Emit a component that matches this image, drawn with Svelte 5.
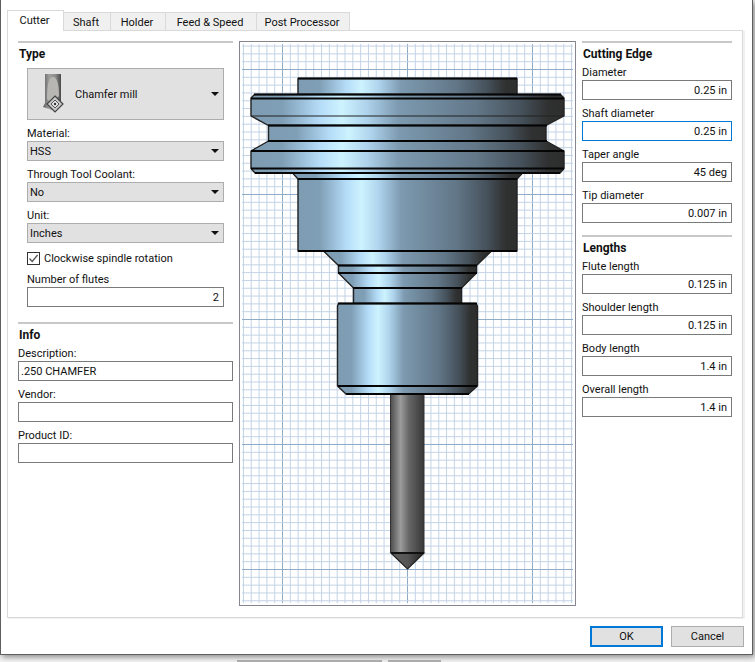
<script>
  const cuttingEdge = [
    { label: 'Diameter', value: '0.25 in' },
    { label: 'Shaft diameter', value: '0.25 in', focus: true },
    { label: 'Taper angle', value: '45 deg' },
    { label: 'Tip diameter', value: '0.007 in' }
  ];
  const lengths = [
    { label: 'Flute length', value: '0.125 in' },
    { label: 'Shoulder length', value: '0.125 in' },
    { label: 'Body length', value: '1.4 in' },
    { label: 'Overall length', value: '1.4 in' }
  ];
  const selects = [
    { label: 'Material:', value: 'HSS' },
    { label: 'Through Tool Coolant:', value: 'No' },
    { label: 'Unit:', value: 'Inches' }
  ];
  const info = [
    { label: 'Description:', value: '.250 CHAMFER' },
    { label: 'Vendor:', value: '' },
    { label: 'Product ID:', value: '' }
  ];
  const tabs = ['Cutter', 'Shaft', 'Holder', 'Feed & Speed', 'Post Processor'];

  const step = 125 / 16;
  const vLines = Array.from({ length: 43 }, (_, i) => ({ x: 282.5 + (i - 5) * step, major: (i - 5) % 16 === 0 }));
  const hLines = Array.from({ length: 72 }, (_, i) => ({ y: 69.5 + (i - 3) * step, major: (i - 3) % 16 === 0 }));

  const shapes = [
    'M298 78.5H517V94.5H298Z',
    'M254.5 94.5H560.5L564 98V116L546 125.5H268.5L251 116V98Z',
    'M268.5 125.5H546V141H268.5Z',
    'M268.5 141H546L564 151V168.5L560 173H255L251 168.5V151Z',
    'M292.5 173H522.5L517 179H298Z',
    'M298 179H517V251H298Z',
    'M323.5 251H491.5L476.5 265.5H338.5Z',
    'M338.5 265.5H476.5V273H338.5Z',
    'M338.5 273H476.5L461.5 288H353.5Z',
    'M353.5 288H461.5V303.5H353.5Z',
    'M338.5 303.5H476L477.5 306V386L468.5 394H346L337.5 386V306Z'
  ];
  const bars = [
    [298, 517, 78.5], [254, 561, 94.5], [251, 564, 98.5], [268, 547, 125.5], [268, 547, 141],
    [251, 564, 151], [251, 564, 168.5], [255, 560, 173], [298, 517, 179], [298, 517, 251],
    [338, 477, 265.5], [338, 477, 273], [353, 462, 288], [338, 477, 303.5], [338, 477, 386], [346, 469, 394]
  ];
</script>

{#snippet field(label, value, focus)}
  <div class="field">
    <span class="label">{label}</span>
    <input class="num" class:focus readonly {value} />
  </div>
{/snippet}

<div class="window">
  <div class="tabs">
    {#each tabs as t, i}
      <div class="tab" class:active={i === 0}>{t}</div>
    {/each}
  </div>

  <div class="panel">
    <div class="col">
      <div class="head">Type</div>
      <div class="indent">
        <div class="big select">
          <svg class="tool-icon" width="22" height="40" viewBox="0 0 22 40">
            <defs>
              <linearGradient id="ic" x1="0" x2="1" y1="0" y2="0">
                <stop offset="0" stop-color="#5e5e5e" />
                <stop offset="0.35" stop-color="#a0a0a0" />
                <stop offset="0.7" stop-color="#8a8a8a" />
                <stop offset="1" stop-color="#4a4a4a" />
              </linearGradient>
            </defs>
            <path d="M3 0H19V27L13 37L1 33L3 29Z" fill="url(#ic)" />
            <path d="M5 25C5 7 8 3 11 3C14 3 17 7 17 22L10 29Z" fill="#b8b6b2" />
            <path d="M13 22L21 30L13 38L5 30Z" fill="#c8c8c8" stroke="#444" stroke-width="1.2" />
            <path d="M13 26L17 30L13 34L9 30Z" fill="#e6e6e6" stroke="#555" />
            <circle cx="13" cy="30" r="1.2" fill="#333" />
          </svg>
          <span class="big-text">Chamfer mill</span>
          <i class="arrow"></i>
        </div>
        {#each selects as s}
          <div class="field">
            <span class="label">{s.label}</span>
            <div class="select"><span>{s.value}</span><i class="arrow"></i></div>
          </div>
        {/each}
        <div class="check">
          <span class="box">
            <svg width="11" height="11" viewBox="0 0 11 11"><path d="M1.5 5.5L4.2 8.5L9.6 2" fill="none" stroke="#555" stroke-width="1.3" /></svg>
          </span>
          <span>Clockwise spindle rotation</span>
        </div>
        <div class="field flutes">
          <span class="label">Number of flutes</span>
          <input class="num" readonly value="2" />
        </div>
      </div>
      <div class="head second">Info</div>
      {#each info as f}
        <div class="field">
          <span class="label">{f.label}</span>
          <input class="text" readonly value={f.value} />
        </div>
      {/each}
    </div>

    <div class="canvas">
      <svg width="335" height="563" viewBox="240 42 335 563">
        <defs>
          <linearGradient id="steel" x1="0" x2="1" y1="0" y2="0">
            <stop offset="0" stop-color="#7e9cb2" />
            <stop offset="0.1" stop-color="#7f9fb6" />
            <stop offset="0.22" stop-color="#b5dcf8" />
            <stop offset="0.29" stop-color="#cdf3ff" />
            <stop offset="0.37" stop-color="#aed3ec" />
            <stop offset="0.47" stop-color="#7d9ab0" />
            <stop offset="0.72" stop-color="#627788" />
            <stop offset="0.86" stop-color="#46525c" />
            <stop offset="0.95" stop-color="#2f3030" />
            <stop offset="1" stop-color="#2e2e2e" />
          </linearGradient>
          <linearGradient id="shank" x1="0" x2="1" y1="0" y2="0">
            <stop offset="0" stop-color="#4c4c4c" />
            <stop offset="0.3" stop-color="#9c9c9c" />
            <stop offset="0.55" stop-color="#666" />
            <stop offset="1" stop-color="#383838" />
          </linearGradient>
          <linearGradient id="tip" x1="0" x2="1" y1="0" y2="0">
            <stop offset="0" stop-color="#606060" />
            <stop offset="0.5" stop-color="#555" />
            <stop offset="1" stop-color="#222" />
          </linearGradient>
        </defs>
        <g stroke-width="1">
          {#each vLines as l}
            <line x1={l.x} x2={l.x} y1="44" y2="603" stroke={l.major ? '#8eabc8' : '#c3d3e6'} />
          {/each}
          {#each hLines as l}
            <line x1="242" x2="573" y1={l.y} y2={l.y} stroke={l.major ? '#8eabc8' : '#c3d3e6'} />
          {/each}
        </g>
        <path d="M390.5 394H424V552.5H390.5Z" fill="url(#shank)" stroke="#333" stroke-width="1" />
        <path d="M391 553H424L407.5 569Z" fill="url(#tip)" stroke="#222" stroke-width="1.2" />
        <line x1="391" x2="424" y1="553" y2="553" stroke="#111" stroke-width="2" />
        {#each shapes as d}
          <path {d} fill="url(#steel)" stroke="#222" stroke-width="1.4" stroke-linejoin="round" />
        {/each}
        {#each bars as b}
          <line x1={b[0]} x2={b[1]} y1={b[2]} y2={b[2]} stroke="#050505" stroke-width="2" />
        {/each}
        <line x1="251" x2="564" y1="116" y2="116" stroke="#222" stroke-width="1" />
      </svg>
    </div>

    <div class="col">
      <div class="head">Cutting Edge</div>
      {#each cuttingEdge as f}
        {@render field(f.label, f.value, f.focus)}
      {/each}
      <div class="head lengths">Lengths</div>
      {#each lengths as f}
        {@render field(f.label, f.value, false)}
      {/each}
    </div>
  </div>

  <div class="footer">
    <button class="btn ok">OK</button>
    <button class="btn">Cancel</button>
  </div>
</div>

<div class="behind">
  <span class="bar a"></span>
  <span class="bar b"></span>
</div>

<style>
  :global(body) {
    margin: 0;
    background: #f4f4f4;
    overflow: hidden;
  }
  .window {
    box-sizing: border-box;
    width: 753px;
    height: 655px;
    background: #fff;
    border: 1px solid #5f5f5f;
    border-top: none;
    padding: 10px 8px 0 6px;
    box-shadow: 2px 2px 6px rgba(0, 0, 0, 0.45);
    font-family: 'Roboto', 'Noto Sans', sans-serif;
    font-size: 11px;
    color: #111;
    display: flex;
    flex-direction: column;
  }
  .tabs {
    display: flex;
    height: 21px;
    margin-bottom: -1px;
    position: relative;
    z-index: 1;
  }
  .tab {
    box-sizing: border-box;
    height: 19px;
    margin-top: 2px;
    padding: 0 2px 0 0;
    line-height: 19px;
    text-align: center;
    background: #f0f0f0;
    border: 1px solid #d9d9d9;
    border-left: none;
    white-space: nowrap;
  }
  .tab.active {
    height: 21px;
    margin-top: 0;
    width: 57px;
    background: #fff;
    border-left: 1px solid #d9d9d9;
    border-bottom: none;
    line-height: 20px;
  }
  .tab:nth-child(2) { width: 47px; }
  .tab:nth-child(3) { width: 55px; }
  .tab:nth-child(4) { width: 91px; }
  .tab:nth-child(5) { width: 93px; }
  .panel {
    box-sizing: border-box;
    width: 736px;
    height: 588px;
    border: 1px solid #d9d9d9;
    box-shadow: 1px 1px 0 #f0f0f0, 2px 1px 0 #f0f0f0;
    padding: 10px 10px 0;
    display: grid;
    grid-template-columns: 215px 337px 150px;
    column-gap: 6px;
    align-items: start;
  }
  .head {
    border-top: 2px solid #c8c8c8;
    height: 16px;
    line-height: 22px;
    padding-left: 1px;
    font-weight: 700;
    font-size: 12px;
  }
  .head.second { margin-top: 15px; }
  .head.lengths { margin-top: 12px; }
  .indent { padding: 9px 9px 0; }
  .field { display: flex; flex-direction: column; }
  .label {
    height: 21px;
    line-height: 15px;
    padding-top: 6px;
    box-sizing: border-box;
    white-space: nowrap;
  }
  .select {
    box-sizing: border-box;
    height: 20px;
    background: #e1e1e1;
    border: 1px solid #adadad;
    display: flex;
    align-items: center;
    justify-content: space-between;
    padding: 1px 4px 0 2px;
  }
  .arrow {
    width: 0;
    height: 0;
    border-left: 4px solid transparent;
    border-right: 4px solid transparent;
    border-top: 4px solid #111;
    margin-top: -1px;
  }
  .big {
    height: 52px;
    padding-left: 14px;
    justify-content: flex-start;
  }
  .tool-icon { flex: none; margin-top: -1px; }
  .big-text { margin-left: 11px; flex: 1; }
  input {
    box-sizing: border-box;
    display: block;
    width: 100%;
    height: 20px;
    border: 1px solid #7a7a7a;
    background: #fff;
    font: inherit;
    color: #111;
    outline: none;
    margin: 0;
  }
  .num { text-align: right; padding: 1px 4px 0; }
  .text { padding: 1px 2px 0; }
  .num.focus { border-color: #0078d7; }
  .check {
    display: flex;
    align-items: center;
    gap: 4px;
    height: 14px;
    margin-top: 8px;
    white-space: nowrap;
  }
  .box {
    box-sizing: border-box;
    width: 13px;
    height: 13px;
    border: 1px solid #333;
    display: flex;
    align-items: center;
    justify-content: center;
  }
  .flutes { margin-top: 1px; }
  .canvas {
    box-sizing: border-box;
    width: 337px;
    height: 565px;
    border: 1px solid #86868e;
    background: #fff;
  }
  .canvas svg { display: block; }
  .footer {
    display: flex;
    justify-content: flex-end;
    gap: 8px;
    padding-top: 8px;
  }
  .btn {
    box-sizing: border-box;
    width: 73px;
    height: 21px;
    background: #e1e1e1;
    border: 1px solid #adadad;
    font: inherit;
    color: #111;
    padding: 0;
  }
  .ok { border: 2px solid #0078d7; }
  .behind {
    display: flex;
    gap: 6px;
    padding: 5px 0 0 237px;
  }
  .bar { height: 2px; background: #ababab; }
  .bar.a { width: 145px; }
  .bar.b { width: 53px; }
</style>
